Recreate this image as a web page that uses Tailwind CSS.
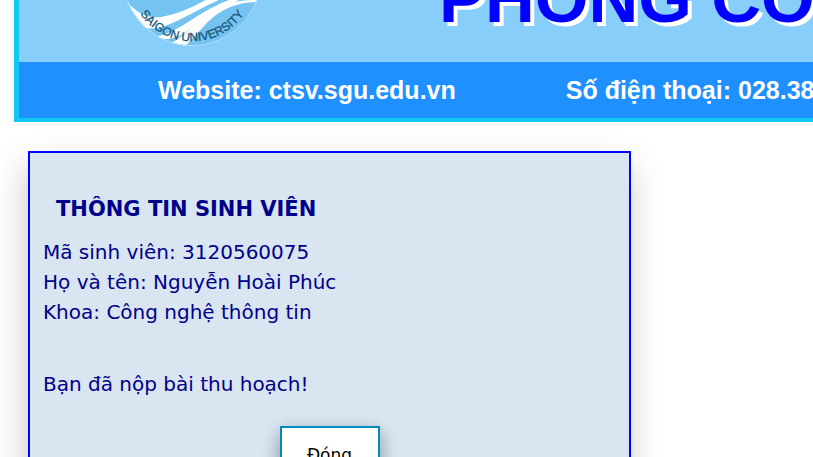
<!DOCTYPE html>
<html lang="vi">
<head>
<meta charset="utf-8">
<meta name="viewport" content="width=device-width, initial-scale=1">
<title>Phòng Công tác sinh viên</title>
<script src="https://cdn.jsdelivr.net/npm/@tailwindcss/browser@4"></script>
</head>
<body class="h-screen overflow-hidden bg-white">
<header class="ml-3.5 border-b-4 border-l-[5px] border-[#10c8f0] font-['Liberation_Sans',sans-serif] font-bold whitespace-nowrap">
  <div class="flex h-[62px] items-end gap-[178px] overflow-hidden bg-[#87cefa] pl-[104px]">
    <svg class="h-[62px] w-[138px] shrink-0" viewBox="0 0 138 62" role="img" aria-label="Saigon University">
      <defs>
        <clipPath id="disc"><circle cx="69" cy="-23" r="69"/></clipPath>
        <path id="arc" d="M8 -6 A63 63 0 0 0 130 -6"/>
      </defs>
      <g clip-path="url(#disc)">
        <rect y="-92" width="138" height="138" fill="#74c3f0"/>
        <path fill="#fff" d="M0 -4 C10 10 20 19 38 17 C58 14 75 4 92 -5 L112 -5 C86 5 68 17 53 25 C45 30 38 33 28 32 L0 20Z"/>
        <path fill="#74c3f0" d="M22 28 C42 32 66 13 98 -1 L108 -3 C82 7 64 29 42 33 C35 35 29 33 22 28Z"/>
        <path fill="#fff" d="M31 37 C58 33 76 9 112 -2 L124 -3 C94 7 76 24 60 34 C53 38 45 40 34 39Z"/>
        <path fill="#fff" d="M44 45 C62 38 76 17 100 5 C114 0 126 0 138 0 L138 2 C108 2 94 13 82 25 C74 34 67 40 62 47Z"/>
      </g>
      <circle cx="69" cy="-23" r="68.5" fill="none" stroke="#b4dffa"/>
      <text fill="#185578" stroke="#185578" stroke-width="0.3" font-size="12" font-weight="400" text-anchor="middle"><textPath href="#arc" startOffset="50%">SAIGON UNIVERSITY</textPath></text>
    </svg>
    <h1 class="pb-[47px] text-[69px] leading-[32px] text-[#0000ff] [text-shadow:4px_4px_0_white]">PHÒNG CÔNG TÁC SINH VIÊN</h1>
  </div>
  <div class="flex h-14 items-center gap-[110px] overflow-hidden bg-[#1e90ff] pt-0.5 pl-[139px] text-[25px] text-white">
    <p>Website: ctsv.sgu.edu.vn</p>
    <p>Số điện thoại: 028.38.352.309</p>
  </div>
</header>
<main class="mt-[29px] ml-7 w-3/4 max-w-[603px] border-2 border-[#0000ff] bg-[#d9e5f0] px-3 pt-[41px] pb-12 font-['DejaVu_Sans',sans-serif] text-xl leading-[30px] text-[#00008b] shadow-[-2px_16px_32px_rgba(0,0,0,0.22)]">
  <h2 class="mb-[13px] pl-3.5 text-[21px] font-bold">THÔNG TIN SINH VIÊN</h2>
  <div class="pl-px">
    <p>Mã sinh viên: 3120560075</p>
    <p>Họ và tên: Nguyễn Hoài Phúc</p>
    <p>Khoa: Công nghệ thông tin</p>
    <p class="mt-[42px]">Bạn đã nộp bài thu hoạch!</p>
  </div>
  <div class="mt-[27px] flex justify-center">
    <button type="button" class="h-[58px] w-[100px] border-2 border-[#008cba] bg-white text-[17px] text-black shadow-[0_8px_16px_rgba(0,0,0,0.2),0_6px_20px_rgba(0,0,0,0.19)]">Đóng</button>
  </div>
</main>
</body>
</html>
